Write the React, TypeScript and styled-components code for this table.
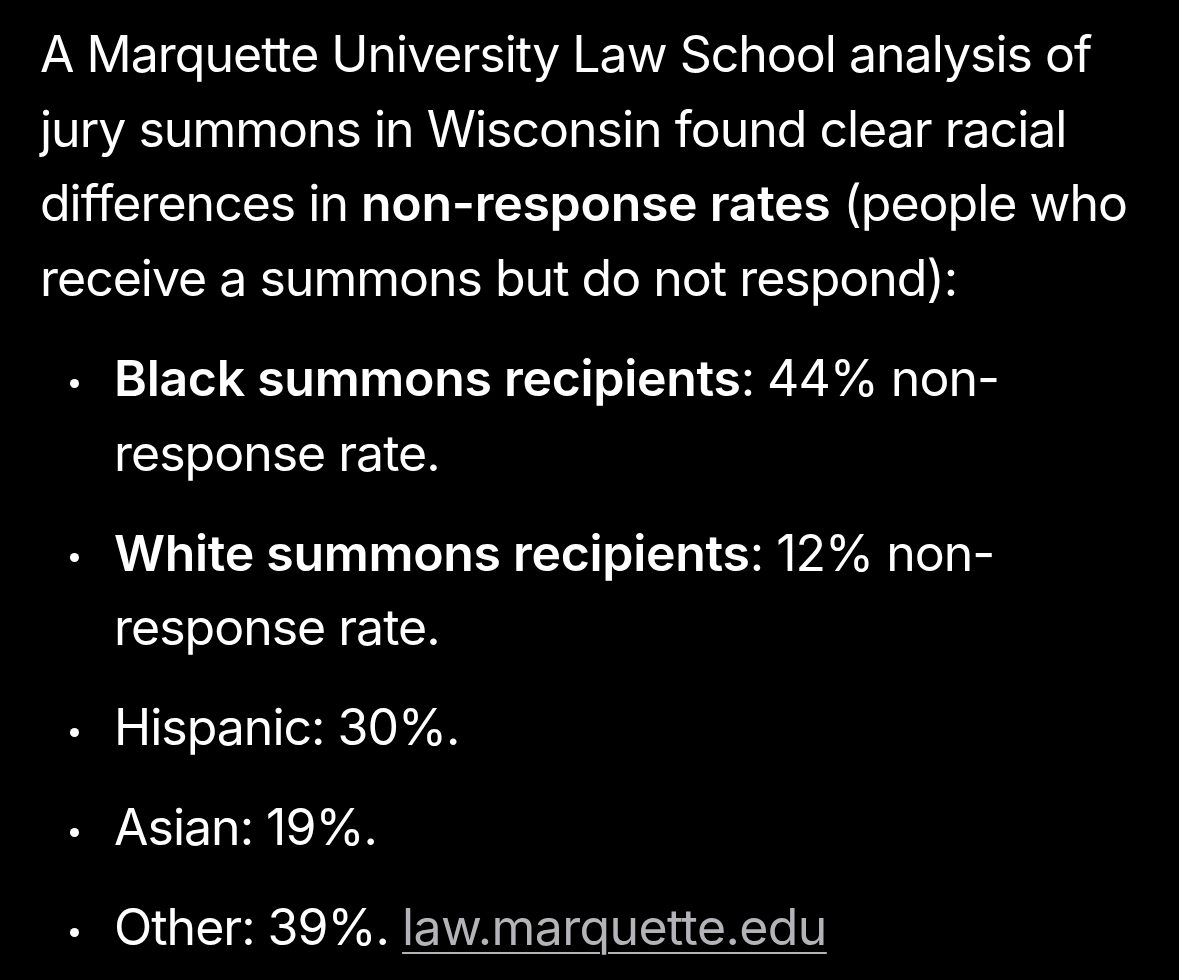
import styled, { createGlobalStyle } from 'styled-components';

const GlobalStyle = createGlobalStyle`
  html, body {
    margin: 0;
    padding: 0;
    background: #000;
  }
  body {
    font-family: Inter, "Noto Sans", "Liberation Sans", sans-serif;
    color: #fff;
  }
`;

const Page = styled.main`
  width: 1179px;
  min-height: 980px;
  box-sizing: border-box;
  padding: 17px 40px 0 40px;
  background: #000;
`;

const Paragraph = styled.p`
  margin: 0;
  font-size: 50px;
  line-height: 74.5px;
  letter-spacing: -1px;
`;

const List = styled.ul`
  list-style: none;
  margin: 26px 0 0 0;
  padding: 0;
  display: flex;
  flex-direction: column;
  gap: 25.5px;
`;

const Item = styled.li`
  position: relative;
  padding-left: 74px;
  font-size: 50px;
  line-height: 74.5px;
  letter-spacing: -1px;

  &::before {
    content: '';
    position: absolute;
    left: 29.5px;
    top: 37.5px;
    width: 9px;
    height: 9px;
    border-radius: 50%;
    background: #fff;
  }
`;

const Strong = styled.strong`
  font-weight: 600;
  letter-spacing: -0.3px;
`;

const Source = styled.a`
  color: #b4b4b8;
  text-decoration: underline;
  text-decoration-thickness: 2px;
  text-underline-offset: 7px;
  letter-spacing: -0.6px;
`;

const items = [
  { label: 'Black summons recipients', rest: ': 44% non-response rate.', bold: true },
  { label: 'White summons recipients', rest: ': 12% non-response rate.', bold: true },
  { label: 'Hispanic', rest: ': 30%.', bold: false },
  { label: 'Asian', rest: ': 19%.', bold: false },
];

export default function App() {
  return (
    <>
      <GlobalStyle />
      <Page>
        <Paragraph>
          A Marquette University Law School analysis of jury summons in Wisconsin found clear racial
          differences in <Strong>non-response rates</Strong> (people who receive a summons but do not
          respond):
        </Paragraph>
        <List>
          {items.map((it) => (
            <Item key={it.label}>
              {it.bold ? <Strong>{it.label}</Strong> : it.label}
              {it.rest}
            </Item>
          ))}
          <Item>
            Other: 39%. <Source href="#">law.marquette.edu</Source>
          </Item>
        </List>
      </Page>
    </>
  );
}
